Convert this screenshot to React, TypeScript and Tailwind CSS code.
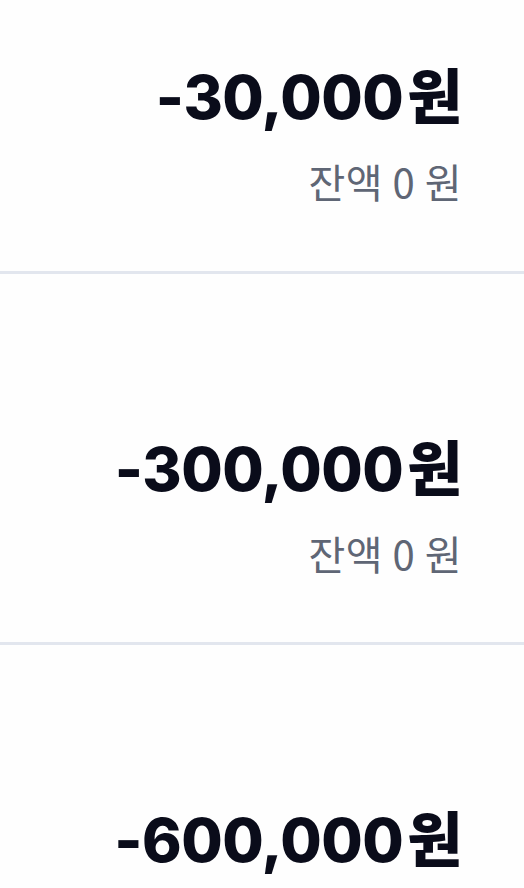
import React from "react";

const rows = [
  { amount: "-30,000", balance: "0" },
  { amount: "-300,000", balance: "0" },
  { amount: "-600,000", balance: "0" },
];

function Row({ amount, balance, first }: { amount: string; balance: string; first?: boolean }) {
  return (
    <div className={`flex flex-col items-end pr-[62px] ${first ? "pt-[63px] pb-[70px]" : "pt-[161px] pb-[69px]"}`}>
      <div
        className="text-[60px] leading-none font-extrabold text-[#0a0c1a] tracking-[-0.5px] whitespace-nowrap"
        style={{ fontFamily: 'Inter, "Noto Sans CJK KR", sans-serif' }}
      >
        {amount}
        <span className="ml-[4px]" style={{ fontFamily: '"Noto Sans CJK KR", sans-serif' }}>원</span>
      </div>
      <div
        className="mt-[34px] text-[40px] leading-none text-[#5f6675] whitespace-nowrap tracking-[0.5px]"
        style={{ fontFamily: '"Noto Sans CJK KR", sans-serif' }}
      >
        잔액 {balance} 원
      </div>
    </div>
  );
}

export default function App() {
  return (
    <div className="w-[524px] h-[888px] overflow-hidden bg-[#fefefe]">
      {rows.map((r, i) => (
        <div key={i}>
          <Row amount={r.amount} balance={r.balance} first={i === 0} />
          {i < rows.length - 1 && <div className="h-[3px] bg-[#e2e6ee]" />}
        </div>
      ))}
    </div>
  );
}
